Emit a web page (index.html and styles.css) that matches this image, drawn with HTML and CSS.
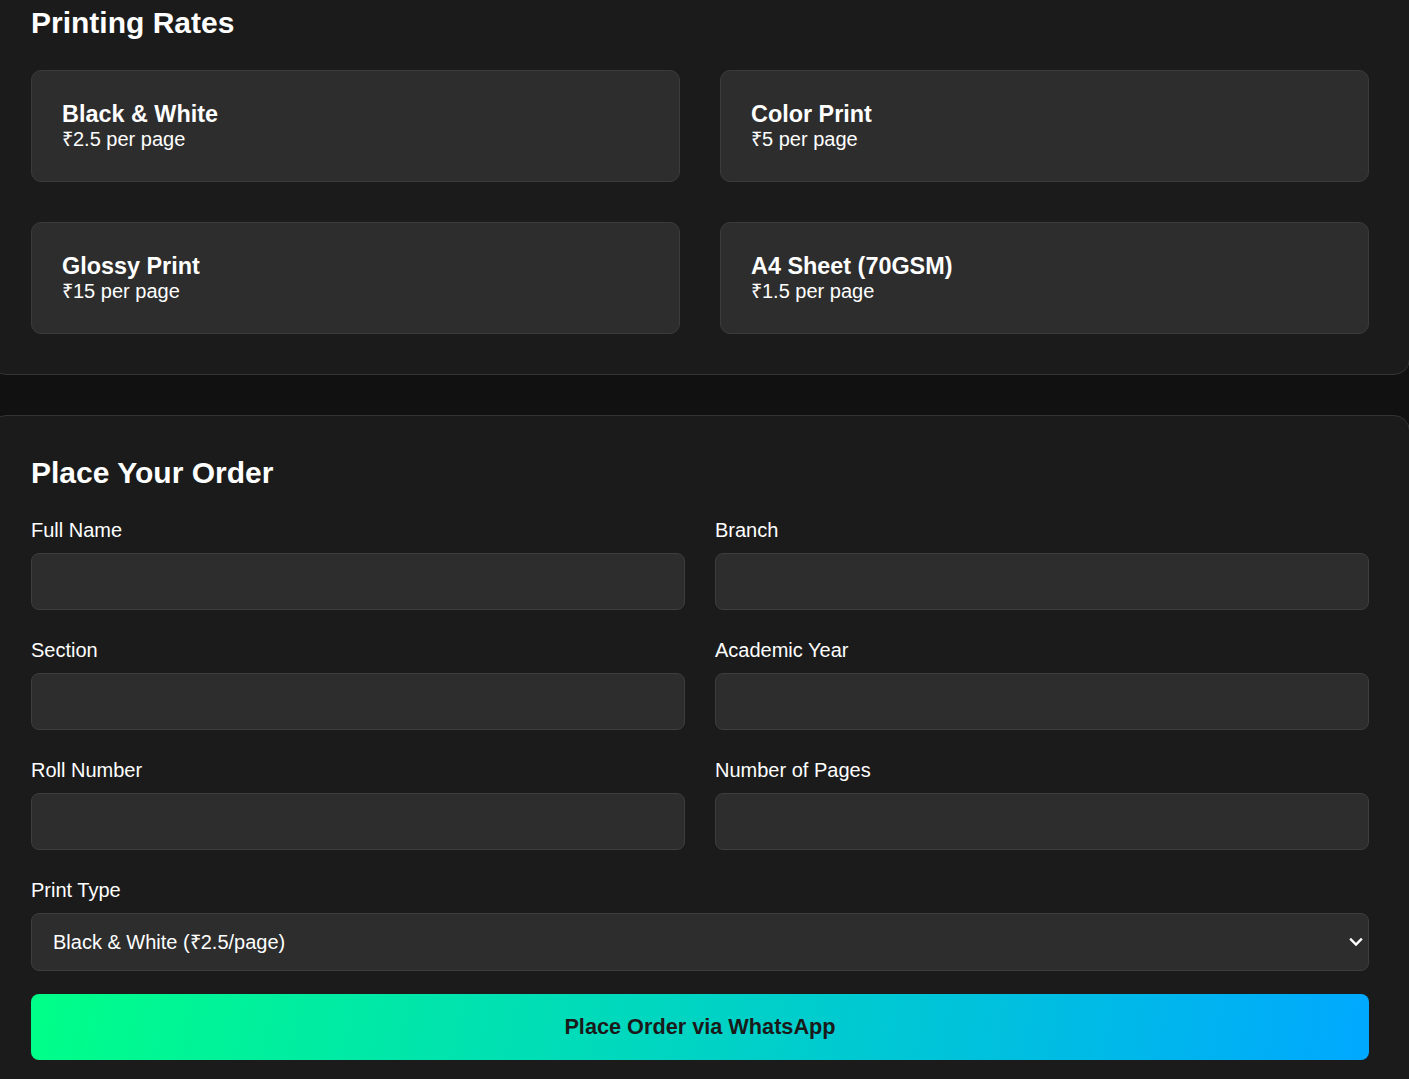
FILE: index.html
```html
<!DOCTYPE html>
<html lang="en">
<head>
<meta charset="utf-8">
<title>Printing</title>
<link rel="stylesheet" href="styles.css">
</head>
<body>
<section class="panel rates">
  <h2 class="panel-title">Printing Rates</h2>
  <div class="rate-grid">
    <div class="rate-card"><div class="rate-name">Black &amp; White</div><div class="rate-price">₹2.5 per page</div></div>
    <div class="rate-card"><div class="rate-name">Color Print</div><div class="rate-price">₹5 per page</div></div>
    <div class="rate-card"><div class="rate-name">Glossy Print</div><div class="rate-price">₹15 per page</div></div>
    <div class="rate-card"><div class="rate-name">A4 Sheet (70GSM)</div><div class="rate-price">₹1.5 per page</div></div>
  </div>
</section>
<section class="panel order">
  <h2 class="panel-title">Place Your Order</h2>
  <form class="order-form">
    <div class="field"><label class="field-label">Full Name</label><input class="field-input" type="text"></div>
    <div class="field"><label class="field-label">Branch</label><input class="field-input" type="text"></div>
    <div class="field"><label class="field-label">Section</label><input class="field-input" type="text"></div>
    <div class="field"><label class="field-label">Academic Year</label><input class="field-input" type="text"></div>
    <div class="field"><label class="field-label">Roll Number</label><input class="field-input" type="text"></div>
    <div class="field"><label class="field-label">Number of Pages</label><input class="field-input" type="text"></div>
    <div class="field field-wide"><label class="field-label">Print Type</label>
      <div class="select-wrap">
        <select class="field-select">
          <option>Black &amp; White (₹2.5/page)</option>
          <option>Color Print (₹5/page)</option>
          <option>Glossy Print (₹15/page)</option>
          <option>A4 Sheet (₹1.5/page)</option>
        </select>
        <svg class="select-arrow" width="14" height="10" viewBox="0 0 14 10" aria-hidden="true"><path d="M2 2.5 L7 7.5 L12 2.5" fill="none" stroke="#ffffff" stroke-width="2.4" stroke-linecap="square"/></svg>
      </div>
    </div>
    <button class="submit-btn" type="button">Place Order via WhatsApp</button>
  </form>
</section>
</body>
</html>
```
FILE: styles.css
```css
html, body {
  margin: 0;
  padding: 0;
  background: #111111;
  color: #ffffff;
  font-family: "Liberation Sans", Arial, sans-serif;
  overflow: hidden;
}
.panel {
  background: #1b1b1b;
  border: 1px solid #333333;
  border-radius: 16px;
  padding: 40px;
  margin-left: -10px;
  width: calc(100% + 11px);
  box-sizing: border-box;
}
.rates {
  margin-top: -35px;
}
.order {
  margin-top: 40px;
}
.panel-title {
  margin: 0 0 31px 0;
  font-size: 30px;
  line-height: 33px;
  font-weight: 700;
}
.order .panel-title {
  margin-bottom: 30px;
}
.rate-grid {
  display: grid;
  grid-template-columns: 1fr 1fr;
  gap: 40px;
}
.rate-card {
  background: #2d2d2d;
  border: 1px solid #3b3b3b;
  border-radius: 10px;
  padding: 30px;
}
.rate-name {
  font-size: 23.4px;
  line-height: 27px;
  font-weight: 700;
}
.rate-price {
  font-size: 20px;
  line-height: 23px;
}
.order-form {
  display: grid;
  grid-template-columns: 1fr 1fr;
  column-gap: 30px;
  row-gap: 29px;
}
.field {
  display: flex;
  flex-direction: column;
}
.field-wide {
  grid-column: 1 / -1;
}
.field-label {
  font-size: 20px;
  line-height: 23px;
  margin-bottom: 11px;
}
.field-input, .field-select {
  height: 57px;
  box-sizing: border-box;
  background: #2d2d2d;
  border: 1px solid #3d3d3d;
  border-radius: 8px;
  color: #ffffff;
  font-family: "Liberation Sans", Arial, sans-serif;
  font-size: 20px;
  padding: 0 20px;
  outline: none;
}
.select-wrap {
  position: relative;
  display: flex;
  flex-direction: column;
}
.field-select {
  height: 58px;
  appearance: none;
  -webkit-appearance: none;
  padding-left: 21px;
}
.select-arrow {
  position: absolute;
  right: 6px;
  top: 24px;
  pointer-events: none;
}
.submit-btn {
  grid-column: 1 / -1;
  margin-top: -6px;
  height: 66px;
  border: none;
  border-radius: 8px;
  background: linear-gradient(100deg, #00ff88 0%, #00a8ff 100%);
  color: #1a1a1a;
  font-family: "Liberation Sans", Arial, sans-serif;
  font-size: 21.7px;
  font-weight: 700;
}
```
